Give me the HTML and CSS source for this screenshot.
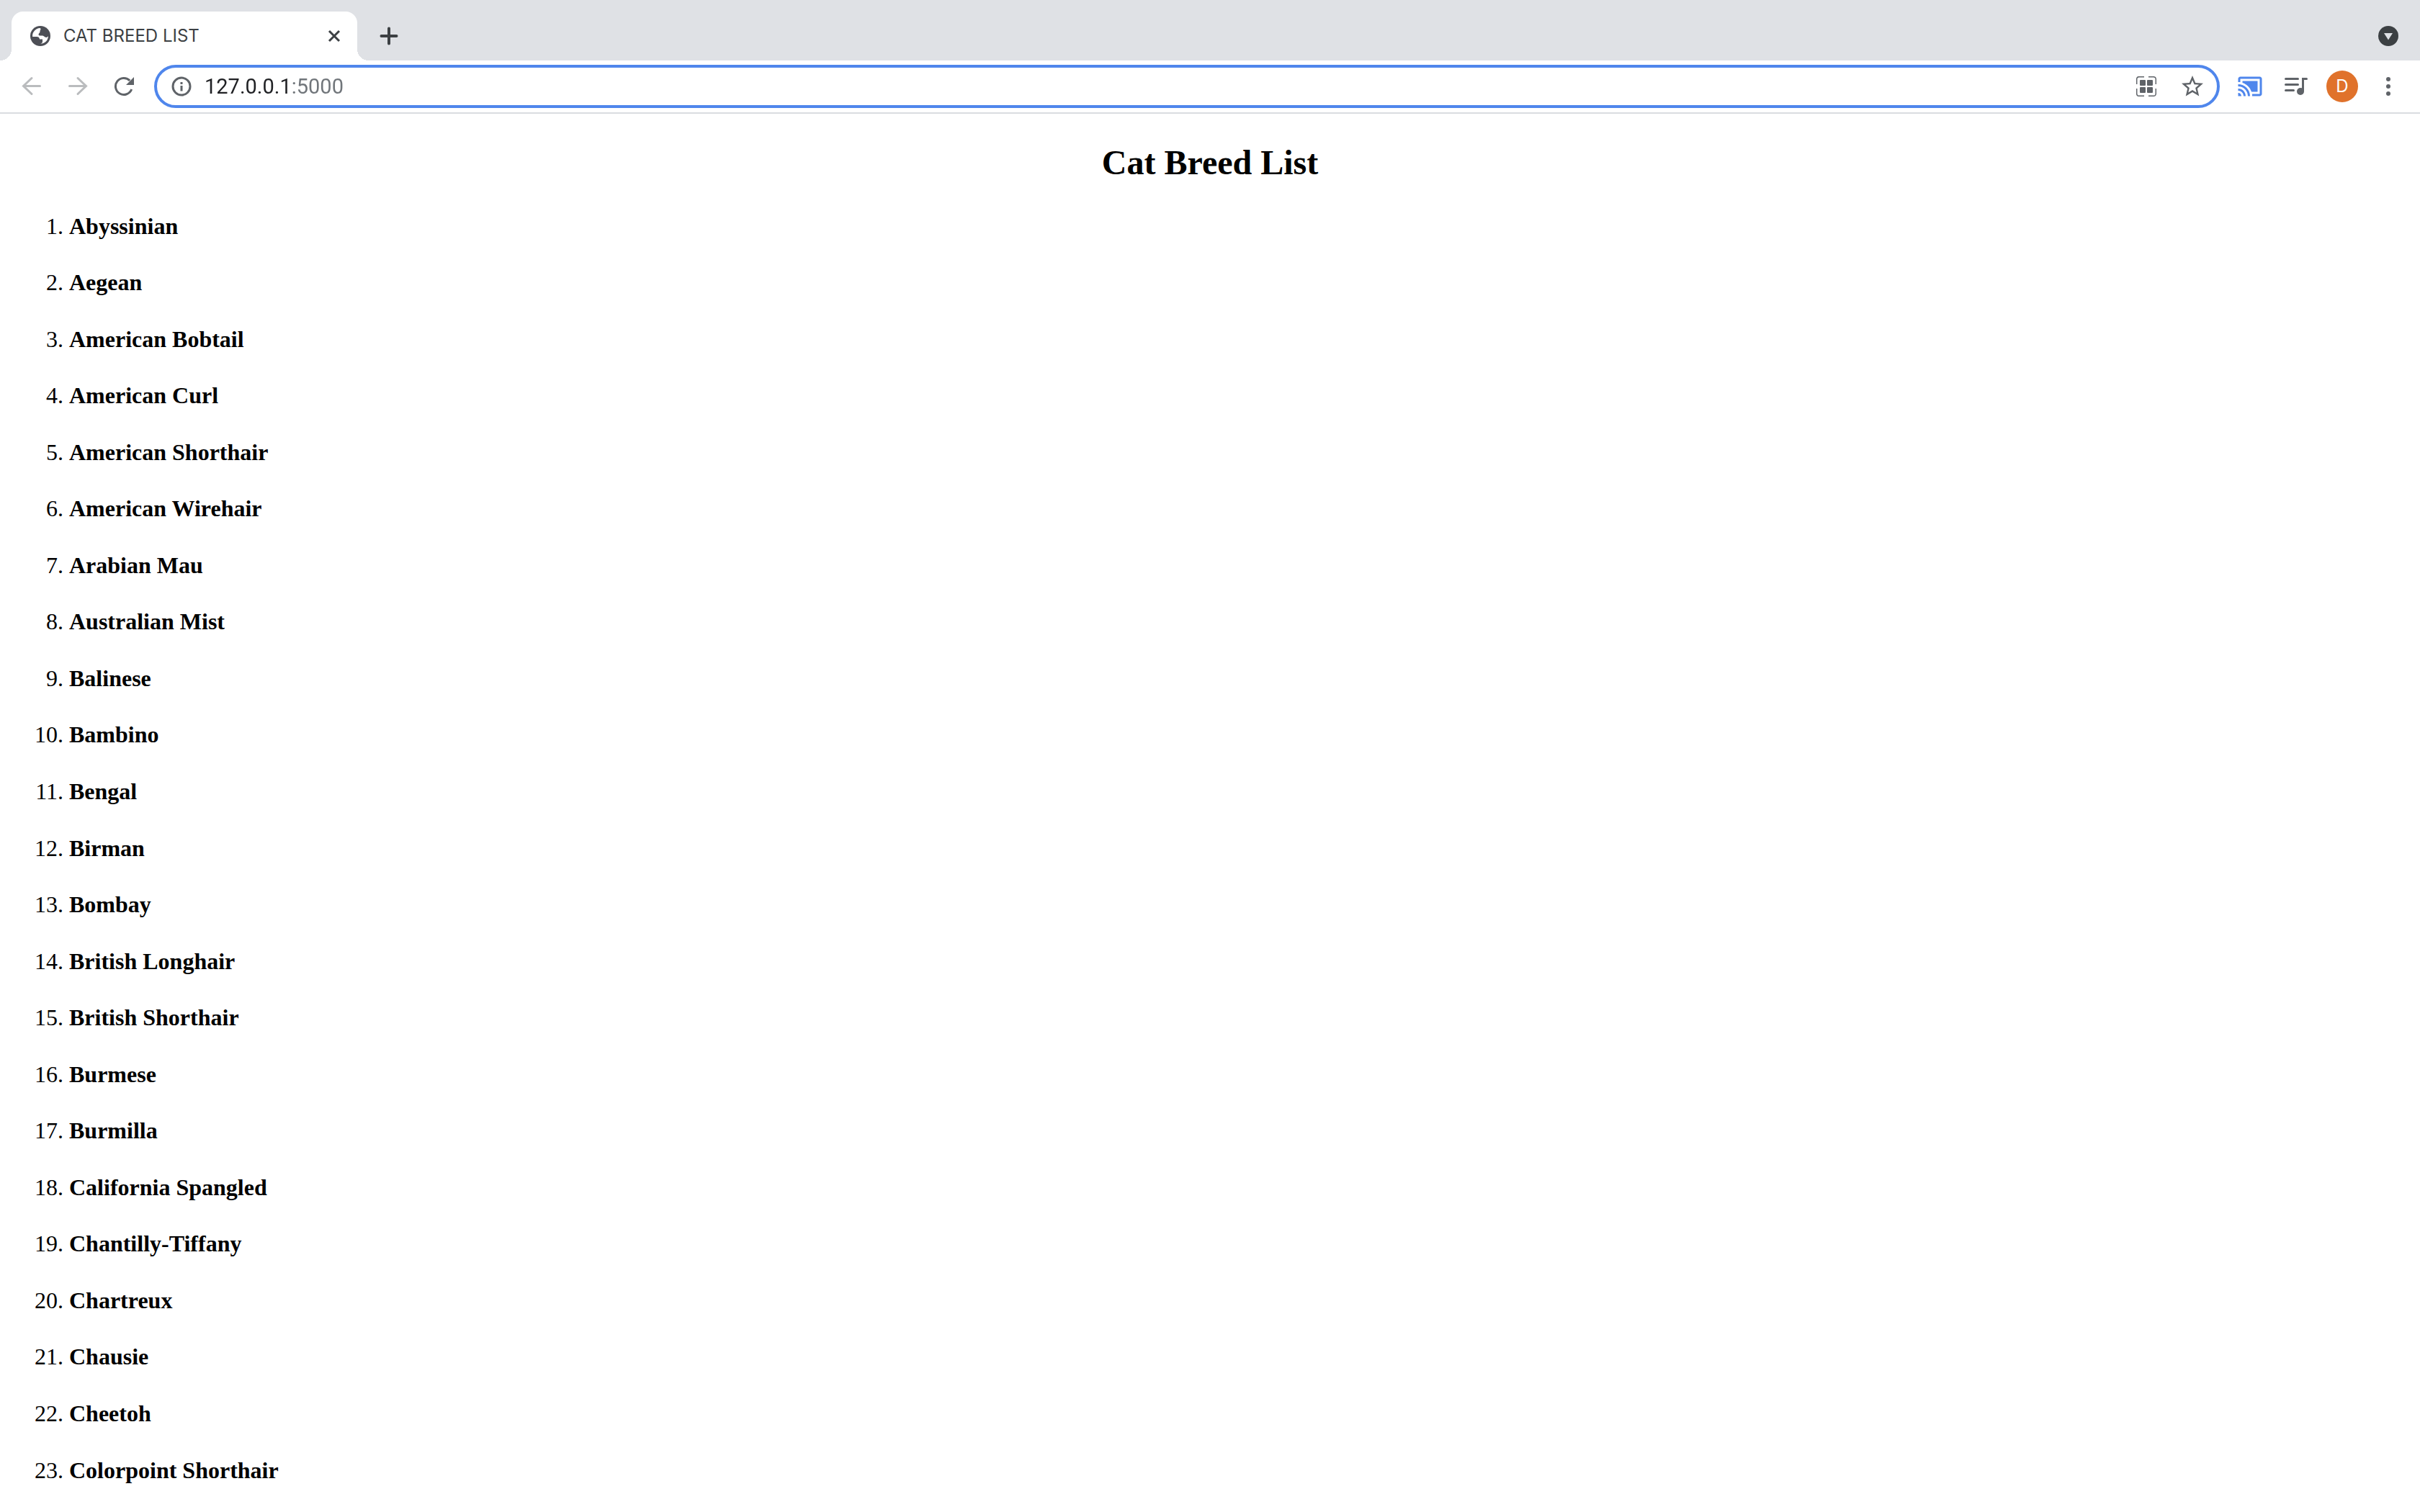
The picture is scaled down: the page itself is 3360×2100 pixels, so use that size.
FILE: index.html
```html
<!DOCTYPE html>
<html lang="en">
<head>
<meta charset="utf-8">
<title>CAT BREED LIST</title>
<link rel="stylesheet" href="styles.css">
</head>
<body>
<header class="browser">
  <div class="tab-strip">
    <div class="tab">
      <svg class="icon globe" viewBox="0 0 28 28" aria-hidden="true"><circle cx="14" cy="14" r="14" fill="#4d4f56"/><path fill="#fff" d="M14 3C10 3 6.500 5 4.500 8.500C3 11 3 13 3.200 15H9C11 15 13 16 13 18.500H17V22C17 23.500 15.500 24.300 14 24.600C20 25 25 20 25 14C24.500 15.500 22.500 16.500 20.500 15.500C19 14.500 18.500 13.500 17 13.500H13.500C11.500 13.500 11 11.500 12 10.500C13 9.500 13.500 9 13.500 7.500C13.500 6 14.500 5.500 14.500 4.500Z"/></svg>
      <span class="tab-title">CAT BREED LIST</span>
      <button class="tab-close" aria-label="Close tab"><svg class="icon" viewBox="0 0 28 28"><path d="M7 7L21 21M21 7L7 21" fill="none" stroke="#3c4043" stroke-width="3"/></svg></button>
    </div>
    <button class="tool new-tab" aria-label="New tab"><svg class="icon" viewBox="0 0 28 28"><path d="M14 3.500V24.500M3.500 14H24.500" fill="none" stroke="#3c4043" stroke-width="4" stroke-linecap="round"/></svg></button>
    <button class="tool tab-search" aria-label="Search tabs"><svg class="icon" viewBox="0 0 28 28"><circle cx="14" cy="14" r="14" fill="#3c4043"/><path d="M8 10H20L14 19.500Z" fill="#dfe1e5"/></svg></button>
  </div>
  <div class="toolbar">
    <button class="tool" aria-label="Back"><svg class="icon" viewBox="0 0 28 28"><path d="M25.500 13.500H3M14 2.500L2.500 13.500L14 24.500" fill="none" stroke="#babcbe" stroke-width="3" stroke-linecap="round"/></svg></button>
    <button class="tool" aria-label="Forward"><svg class="icon" viewBox="0 0 28 28"><path d="M2.500 13.500H25M14 2.500L25.500 13.500L14 24.500" fill="none" stroke="#babcbe" stroke-width="3" stroke-linecap="round"/></svg></button>
    <button class="tool" aria-label="Reload"><svg class="icon" viewBox="0 0 28 28"><path d="M24.700 18A11.500 11.500 0 1 1 22.200 5.900" fill="none" stroke="#5f6368" stroke-width="3"/><path d="M28 1V12H17Z" fill="#5f6368"/></svg></button>
    <div class="omnibox">
      <button class="tool" aria-label="Site information"><svg class="icon" viewBox="0 0 28 28"><circle cx="14" cy="14" r="12" fill="none" stroke="#5f6368" stroke-width="3"/><path d="M12.500 8H15.500V11H12.500ZM12.500 13H15.500V20.500H12.500Z" fill="#5f6368"/></svg></button>
      <input class="address" type="text" aria-label="Address" spellcheck="false" value="127.0.0.1:5000">
      <button class="tool" aria-label="QR code"><svg class="icon" viewBox="0 0 28 28"><path d="M.700 11V4Q.700.700 4 .700H11M17 .700H24Q27.300.700 27.300 4V11M27.300 17V24Q27.300 27.300 24 27.300H17M11 27.300H4Q.700 27.300.700 24V17" fill="none" stroke="#5f6368" stroke-width="1.500"/><g fill="#5f6368"><rect x="5" y="5" width="8" height="8" rx="1"/><rect x="15" y="5" width="8" height="8" rx="1"/><rect x="5" y="15" width="8" height="8" rx="1"/><rect x="15" y="15" width="8" height="8" rx="1"/></g></svg></button>
      <button class="tool" aria-label="Bookmark this tab"><svg class="icon large" viewBox="0 0 24 24"><path fill="#5f6368" d="M22 9.240l-7.190-.620L12 2 9.190 8.630 2 9.240l5.460 4.730L5.820 21 12 17.270 18.180 21l-1.630-7.030L22 9.240zM12 15.400l-3.760 2.270 1-4.280-3.320-2.880 4.380-.380L12 6.100l1.710 4.040 4.380.380-3.320 2.880 1 4.280L12 15.400z"/></svg></button>
    </div>
    <button class="tool" aria-label="Cast"><svg class="icon large" viewBox="0 0 24 24"><path fill="#4f86ec" d="M1 18v3h3c0-1.660-1.340-3-3-3zm0-4v2c2.760 0 5 2.240 5 5h2c0-3.870-3.130-7-7-7zm18-7H5v1.630c3.960 1.280 7.090 4.410 8.370 8.370H19V7zM1 10v2c4.970 0 9 4.030 9 9h2c0-6.080-4.930-11-11-11zm20-7H3c-1.100 0-2 .900-2 2v3h2V5h18v14h-7v2h7c1.100 0 2-.900 2-2V5c0-1.100-.900-2-2-2z"/></svg></button>
    <button class="tool" aria-label="Media controls"><svg class="icon wide" viewBox="0 0 32 28"><path d="M1.500 3.500H18.500M1.500 11.500H18.500M1.500 19.500H12.500M25.500 20V3.500H30.500" fill="none" stroke="#5f6368" stroke-width="3" stroke-linecap="round"/><circle cx="22" cy="21" r="5" fill="#5f6368"/></svg></button>
    <button class="tool" aria-label="Profile"><span class="avatar">D</span></button>
    <button class="tool" aria-label="Menu"><svg class="icon" viewBox="0 0 28 28"><g fill="#5f6368"><circle cx="14" cy="4" r="3"/><circle cx="14" cy="14" r="3"/><circle cx="14" cy="24" r="3"/></g></svg></button>
  </div>
</header>
<main class="page">
  <h2 class="page-title">Cat Breed List</h2>
  <ol class="breeds">
    <li><h4>Abyssinian</h4></li>
    <li><h4>Aegean</h4></li>
    <li><h4>American Bobtail</h4></li>
    <li><h4>American Curl</h4></li>
    <li><h4>American Shorthair</h4></li>
    <li><h4>American Wirehair</h4></li>
    <li><h4>Arabian Mau</h4></li>
    <li><h4>Australian Mist</h4></li>
    <li><h4>Balinese</h4></li>
    <li><h4>Bambino</h4></li>
    <li><h4>Bengal</h4></li>
    <li><h4>Birman</h4></li>
    <li><h4>Bombay</h4></li>
    <li><h4>British Longhair</h4></li>
    <li><h4>British Shorthair</h4></li>
    <li><h4>Burmese</h4></li>
    <li><h4>Burmilla</h4></li>
    <li><h4>California Spangled</h4></li>
    <li><h4>Chantilly-Tiffany</h4></li>
    <li><h4>Chartreux</h4></li>
    <li><h4>Chausie</h4></li>
    <li><h4>Cheetoh</h4></li>
    <li><h4>Colorpoint Shorthair</h4></li>
  </ol>
</main>
</body>
</html>
```
FILE: styles.css
```css
* { box-sizing: border-box; }

body {
  margin: 0;
  height: 100vh;
  display: flex;
  flex-direction: column;
  background: #fff;
  color: #000;
}

button {
  margin: 0;
  padding: 0;
  border: 0;
  background: none;
  font: inherit;
  color: inherit;
}

.browser {
  flex: none;
  font-family: Inter, "Liberation Sans", sans-serif;
  border-bottom: 2px solid #dadce0;
}

.tab-strip {
  display: flex;
  align-items: stretch;
  padding: 16px 12px 0 16px;
  background: #dfe1e5;
}

.tab {
  position: relative;
  display: flex;
  align-items: center;
  width: 480px;
  height: 68px;
  padding: 0 18px 0 26px;
  border-radius: 16px 16px 0 0;
  background: #fff;
}

/* Flared feet where the tab meets the toolbar */
.tab::before,
.tab::after {
  content: "";
  position: absolute;
  bottom: 0;
  width: 16px;
  height: 16px;
}
.tab::before {
  right: 100%;
  background: radial-gradient(circle at 0 0, #dfe1e5 16px, #fff 16px);
}
.tab::after {
  left: 100%;
  background: radial-gradient(circle at 100% 0, #dfe1e5 16px, #fff 16px);
}

.tab-title {
  flex: 1;
  margin-left: 18px;
  font-size: 24px;
  line-height: 32px;
  color: #3c4043;
}

.tab-close,
.tool {
  display: flex;
  flex: none;
  align-items: center;
  justify-content: center;
}
.tool { width: 64px; }
.new-tab { margin-left: 12px; }
.tab-search { margin-left: auto; }

.icon { display: block; width: 28px; height: 28px; }
.icon.wide { width: 32px; }
.icon.large { width: 36px; height: 36px; }

.toolbar {
  display: flex;
  align-items: center;
  height: 72px;
  padding: 0 12px;
}

.omnibox {
  flex: 1;
  display: flex;
  align-items: center;
  height: 60px;
  margin: 0 10px;
  padding: 0 2px;
  border: 4px solid #4f86ec;
  border-radius: 30px;
}

/* The host is dark, the port after it is grey */
.address {
  flex: 1;
  min-width: 0;
  margin: 0;
  padding: 0;
  border: 0;
  outline: 0;
  font: 29px/36px Roboto, "Liberation Sans", sans-serif;
  color: transparent;
  caret-color: #202124;
  background: linear-gradient(to right, #202124 120px, #70757a 120px);
  -webkit-background-clip: text;
  background-clip: text;
}

.avatar {
  width: 44px;
  height: 44px;
  border-radius: 50%;
  background: #e0722b;
  color: #fff;
  font-size: 24px;
  line-height: 44px;
  text-align: center;
}

.page {
  flex: 1;
  min-height: 0;
  overflow-y: auto;
  scrollbar-width: none;
  padding: 0 16px;
  font: 32px/36px "Liberation Serif", "Times New Roman", serif;
}

.page-title {
  margin: 40px 0;
  font-size: 48px;
  line-height: 55px;
  text-align: center;
}

.breeds {
  margin: 0;
  padding-left: 80px;
}
```
